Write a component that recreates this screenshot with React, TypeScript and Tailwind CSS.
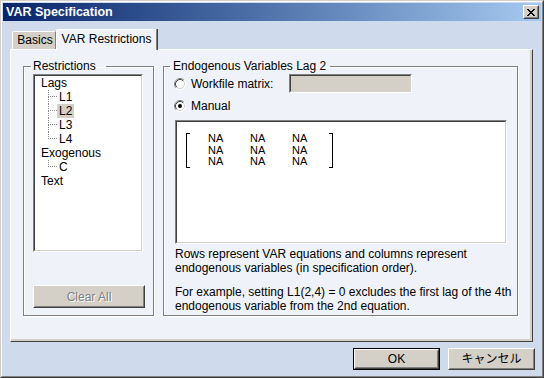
import React from 'react';

const UI = "font-['Liberation_Sans','Noto_Sans_CJK_JP',sans-serif]";

function Radio({ checked }: { checked?: boolean }) {
  return (
    <svg width="12" height="12" viewBox="0 0 12 12" className="shrink-0">
      <circle cx="6" cy="6" r="5" fill="#fff" />
      <path d="M9.89 2.11A5.5 5.5 0 0 0 2.11 9.89" stroke="#808080" fill="none" />
      <path d="M9.89 2.11A5.5 5.5 0 0 1 2.11 9.89" stroke="#fff" fill="none" />
      <path d="M9.18 2.82A4.5 4.5 0 0 0 2.82 9.18" stroke="#404040" fill="none" />
      <path d="M9.18 2.82A4.5 4.5 0 0 1 2.82 9.18" stroke="#d4d0c8" fill="none" />
      {checked && <circle cx="6" cy="6" r="2" fill="#000" />}
    </svg>
  );
}

function TreeChild({ label, last, selected }: { label: string; last?: boolean; selected?: boolean }) {
  return (
    <div className="flex h-[14px] items-center">
      <div className="ml-[13px] flex h-full w-[9px] flex-col">
        <div className="h-[7px] border-l border-b border-dotted border-[#8a8a8a]" />
        {!last && <div className="h-[7px] border-l border-dotted border-[#8a8a8a]" />}
      </div>
      <span className={selected ? 'bg-[#d4d0c8] px-[2px] leading-[14px]' : 'px-[2px] leading-[14px]'}>{label}</span>
    </div>
  );
}

function Button({ label, def, disabled, className }: { label: string; def?: boolean; disabled?: boolean; className: string }) {
  const face = (
    <div className="h-full border border-t-white border-l-white border-r-[#404040] border-b-[#404040]">
      <div className="flex h-full items-center justify-center border border-t-[#d4d0c8] border-l-[#d4d0c8] border-r-[#808080] border-b-[#808080] bg-[#d4d0c8]">
        <span className={disabled ? 'text-[#808080] [text-shadow:1px_1px_0_#fff]' : 'text-black'}>{label}</span>
      </div>
    </div>
  );
  return <div className={`${className} ${def ? 'border border-black' : ''}`}>{face}</div>;
}

export default function App() {
  return (
    <div className={`${UI} h-[378px] w-[544px] border border-t-[#d4d0c8] border-l-[#d4d0c8] border-r-[#404040] border-b-[#404040] text-[12px] text-black`}>
      <div className="flex h-full flex-col border border-t-white border-l-white border-r-[#808080] border-b-[#808080] bg-[#cfdbec] p-px">
        {/* Title bar */}
        <div className="flex h-[18px] shrink-0 items-center justify-between bg-gradient-to-r from-[#0a246a] to-[#a6caf0] pl-[3px] pr-[2px]">
          <span className="text-[12.5px] font-bold text-white">VAR Specification</span>
          <div className="h-[14px] w-[16px] border border-t-white border-l-white border-r-[#404040] border-b-[#404040]">
            <div className="flex h-full items-center justify-center border border-t-[#d4d0c8] border-l-[#d4d0c8] border-r-[#808080] border-b-[#808080] bg-[#d4d0c8]">
              <svg width="8" height="7" viewBox="0 0 8 7">
                <path d="M0 0L7 7M1 0L8 7M7 0L0 7M8 0L1 7" stroke="#000" strokeWidth="1" />
              </svg>
            </div>
          </div>
        </div>

        {/* Tabs */}
        <div className="mt-[7px] flex h-[21px] items-end pl-[9px]">
          <div className="flex h-[18px] w-[44px] items-center justify-center rounded-tl-[2px] border-t border-l border-r border-t-white border-l-white border-r-[#808080] bg-[#d4d0c8] pb-[2px] pl-[2px]">
            Basics
          </div>
          <div className="relative z-10 -mb-px flex h-[21px] w-[101px] items-center justify-center rounded-tl-[2px] border-t border-l border-r border-t-white border-l-white border-r-[#808080] bg-[#eff3f9] pb-[3px] shadow-[1px_0_0_#404040]">
            VAR Restrictions
          </div>
        </div>

        {/* Tab page */}
        <div className="ml-[7px] h-[293px] w-[523px] border border-t-white border-l-white border-r-[#404040] border-b-[#404040]">
          <div className="flex h-full gap-[9px] border-r-2 border-b-2 border-r-[#d4d0c8] border-b-[#d4d0c8] bg-[#eff3f9] pl-[12px] pt-[9px]">
            {/* Restrictions group */}
            <fieldset className="h-[257px] w-[131px] border border-[#808080] shadow-[1px_1px_0_#fff,inset_1px_1px_0_#fff]">
              <legend className="ml-[7px] pl-[2px] pr-[10px] leading-[14px]">Restrictions</legend>
              <div className="flex flex-col pl-[9px] pt-px">
                <div className="h-[178px] w-[110px] border border-t-[#808080] border-l-[#808080] border-r-white border-b-white">
                  <div className="h-full border border-t-[#404040] border-l-[#404040] border-r-[#d4d0c8] border-b-[#d4d0c8] bg-white">
                    <div className="flex h-[14px] items-center pl-[6px]">Lags</div>
                    <TreeChild label="L1" />
                    <TreeChild label="L2" selected />
                    <TreeChild label="L3" />
                    <TreeChild label="L4" last />
                    <div className="flex h-[14px] items-center pl-[6px]">Exogenous</div>
                    <TreeChild label="C" last />
                    <div className="flex h-[14px] items-center pl-[6px]">Text</div>
                  </div>
                </div>
                <Button label="Clear All" disabled className="mt-[33px] h-[23px] w-[112px]" />
              </div>
            </fieldset>

            {/* Endogenous group */}
            <fieldset className="h-[257px] w-[355px] border border-[#808080] shadow-[1px_1px_0_#fff,inset_1px_1px_0_#fff]">
              <legend className="ml-[6px] pl-[3px] pr-[4px] leading-[14px]">Endogenous Variables Lag 2</legend>
              <div className="flex flex-col pl-[10px] pt-px">
                <div className="flex h-[19px] items-center">
                  <Radio />
                  <span className="ml-[5px] w-[98px]">Workfile matrix:</span>
                  <div className="h-[19px] w-[123px] border border-t-[#808080] border-l-[#808080] border-r-white border-b-white">
                    <div className="h-full border border-t-[#404040] border-l-[#404040] border-r-[#d4d0c8] border-b-[#d4d0c8] bg-[#d4d0c8]" />
                  </div>
                </div>
                <div className="mt-[3px] flex h-[19px] items-center">
                  <Radio checked />
                  <span className="ml-[5px]">Manual</span>
                </div>
                <div className="ml-px mt-[5px] h-[124px] w-[332px] border border-t-[#808080] border-l-[#808080] border-r-white border-b-white">
                  <div className="h-full border border-t-[#404040] border-l-[#404040] border-r-[#d4d0c8] border-b-[#d4d0c8] bg-white pl-[9px] pt-[11px]">
                    <div className="flex items-start font-['Liberation_Sans',sans-serif] text-[11px] leading-[11.5px]">
                      <div className="h-[35px] w-[4px] border-l border-t border-b border-black" />
                      <div className="ml-[18px] grid grid-cols-[42px_42px_42px]">
                        {Array.from({ length: 9 }).map((_, i) => (
                          <span key={i}>NA</span>
                        ))}
                      </div>
                      <div className="ml-[-5px] h-[35px] w-[4px] border-r border-t border-b border-black" />
                    </div>
                  </div>
                </div>
                <div className="ml-px mt-[3px] leading-[14px]">
                  <p>Rows represent VAR equations and columns represent<br />endogenous variables (in specification order).</p>
                  <p className="mt-[10px]">For example, setting L1(2,4) = 0 excludes the first lag of the 4th<br />endogenous variable from the 2nd equation.</p>
                </div>
              </div>
            </fieldset>
          </div>
        </div>

        {/* Dialog buttons */}
        <div className="mt-[6px] flex justify-end gap-[8px] pr-[6px]">
          <Button label="OK" def className="h-[22px] w-[87px]" />
          <Button label="キャンセル" className="h-[22px] w-[87px]" />
        </div>
      </div>
    </div>
  );
}
